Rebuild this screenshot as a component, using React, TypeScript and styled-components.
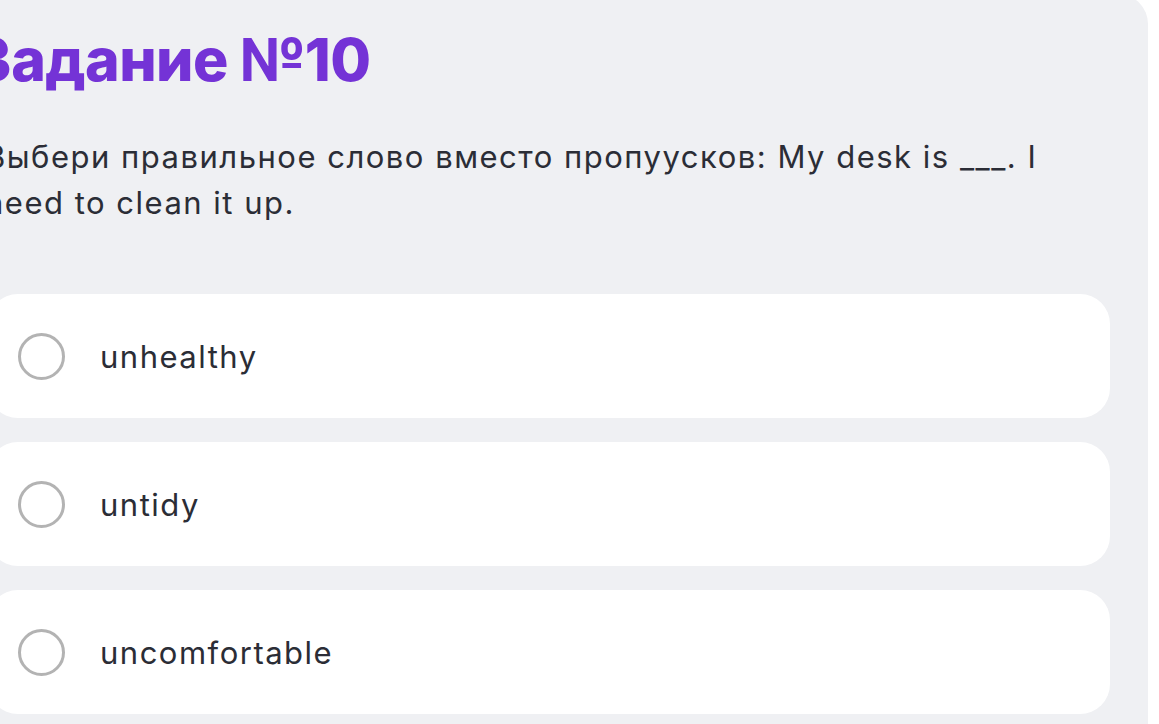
import styled, { createGlobalStyle } from "styled-components";

const GlobalStyle = createGlobalStyle`
    html, body {
        margin: 0;
        padding: 0;
        background: #ffffff;
        overflow: hidden;
    }
    body {
        font-family: Inter, "Noto Sans", sans-serif;
        -webkit-font-smoothing: antialiased;
    }
`;

const options = ["unhealthy", "untidy", "uncomfortable"];

export default function App() {
    return (
        <>
            <GlobalStyle />
            <Page>
                <Panel>
                    <Title>Задание №10</Title>
                    <Question>
                        Выбери правильное слово вместо пропуусков: My desk is ___. I need to clean it up.
                    </Question>
                    <Options>
                        {options.map((label) => (
                            <Option key={label}>
                                <Radio />
                                <OptionLabel>{label}</OptionLabel>
                            </Option>
                        ))}
                    </Options>
                </Panel>
            </Page>
        </>
    );
}

const Page = styled.div`
    width: 1159px;
    height: 724px;
    overflow: hidden;
`;

const Panel = styled.div`
    margin-top: -6px;
    margin-left: -40px;
    width: 1188px;
    box-sizing: border-box;
    padding: 30px 38px 40px 28px;
    background: #eff0f3;
    border-top-right-radius: 30px;
    display: flex;
    flex-direction: column;
`;

const Title = styled.h1`
    margin: 0 0 0 -15px;
    font-size: 59px;
    line-height: 72px;
    font-weight: 800;
    color: #7433d6;
    letter-spacing: -0.6px;
`;

const Question = styled.p`
    margin: 38px 40px 0 -3px;
    font-size: 31px;
    line-height: 46px;
    font-weight: 400;
    letter-spacing: 1.5px;
    color: #2b2d36;
`;

const Options = styled.div`
    margin-top: 68px;
    display: flex;
    flex-direction: column;
    gap: 24px;
`;

const Option = styled.label`
    height: 124px;
    box-sizing: border-box;
    padding-left: 30px;
    background: #ffffff;
    border-radius: 30px;
    display: flex;
    align-items: center;
    gap: 35px;
    cursor: pointer;
`;

const Radio = styled.span`
    flex: 0 0 auto;
    width: 47px;
    height: 47px;
    box-sizing: border-box;
    border: 3.5px solid #b3b3b3;
    border-radius: 50%;
`;

const OptionLabel = styled.span`
    font-size: 31px;
    font-weight: 400;
    letter-spacing: 1.5px;
    color: #2b2d36;
`;
